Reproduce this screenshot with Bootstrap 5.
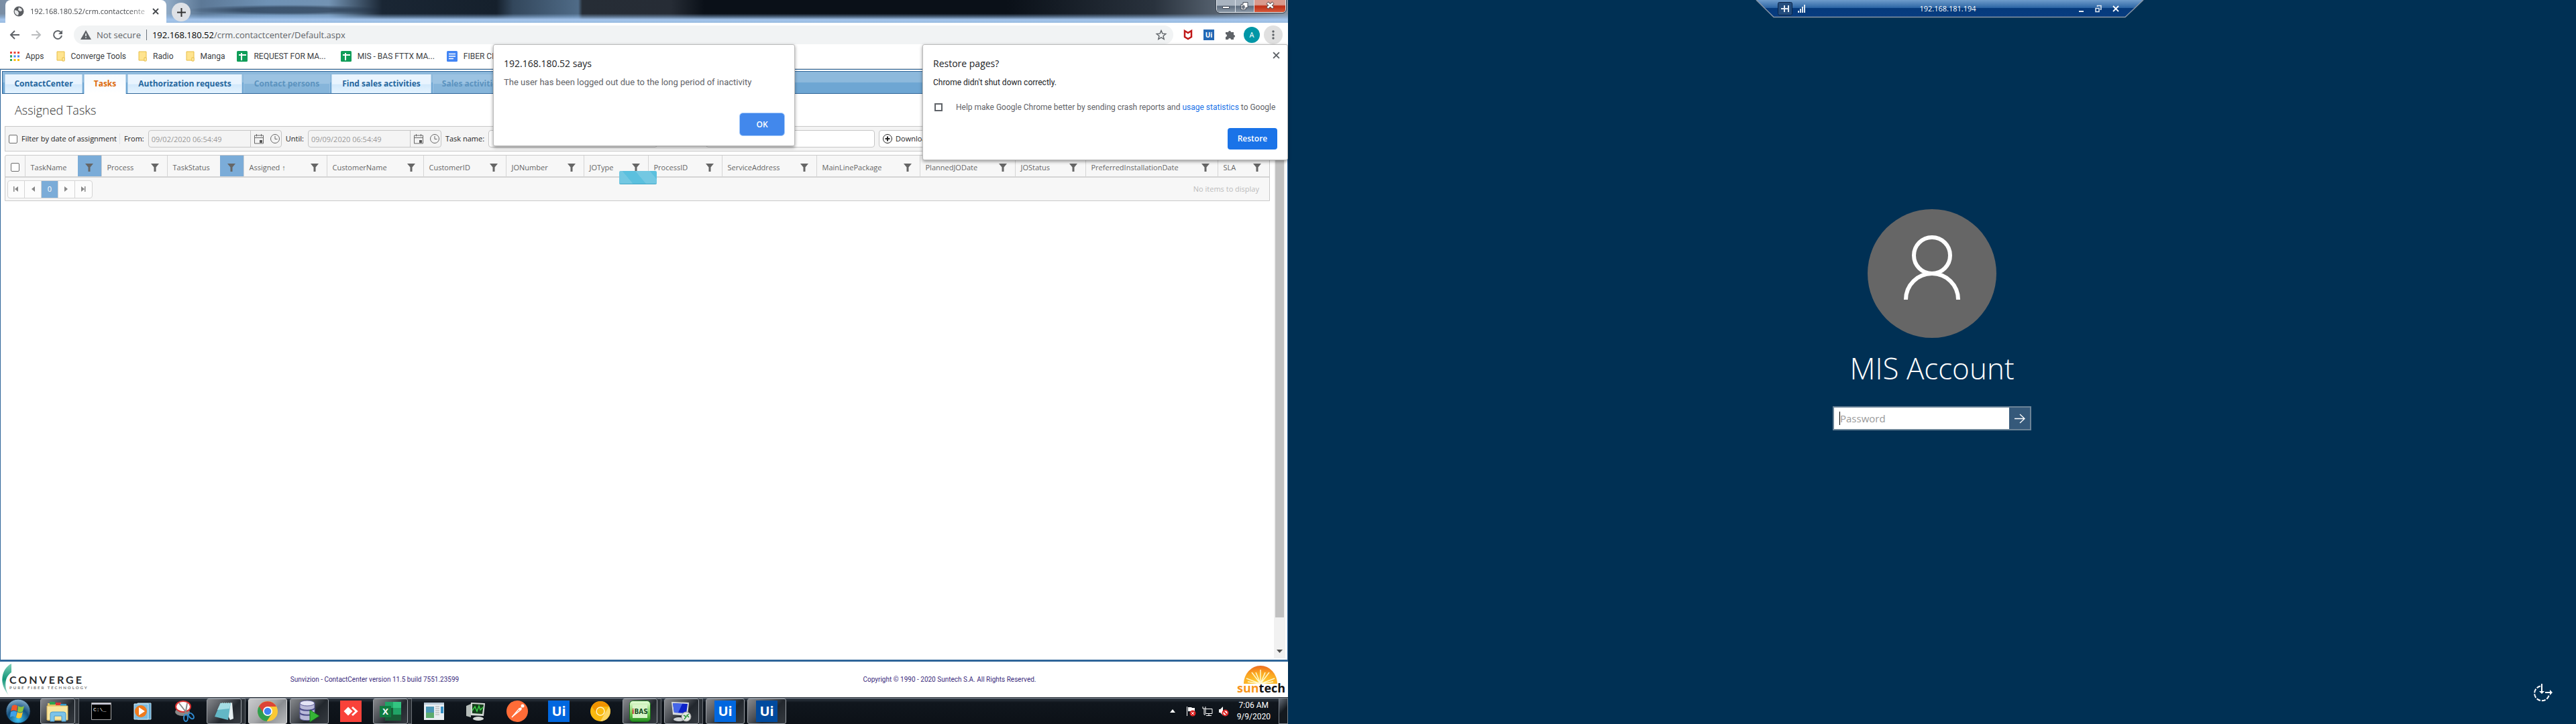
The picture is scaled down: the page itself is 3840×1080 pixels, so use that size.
<!DOCTYPE html>
<html lang="en">
<head>
<meta charset="utf-8">
<meta name="viewport" content="width=device-width, initial-scale=1">
<title>ContactCenter - Assigned Tasks</title>
<link rel="stylesheet" href="https://cdn.jsdelivr.net/npm/bootstrap@5.3.0/dist/css/bootstrap.min.css">
<style>
:root{--ui:"Open Sans","Noto Sans",sans-serif;--dlg:Roboto,"Open Sans",sans-serif;--line:#2f6699;--grey:#5f6368}
body{font:11px/16px var(--ui);color:#333;background:#003054}
button,input{font:inherit;color:inherit}
button{border:0;background:none;padding:0}
svg{display:block;flex:none;overflow:visible}
.desktop{min-height:100vh}
.monitor{flex:1 1 0;min-width:0}
.left-side{background:#fff}
/* browser chrome */
.titlebar{height:34px;background:
 linear-gradient(180deg,transparent 60%,rgba(150,190,235,.5) 74%,#a5c5ec 86%,#98bbe0 100%),
 radial-gradient(ellipse 150px 8px at 430px 15px,rgba(20,35,55,.55) 50%,transparent),
 linear-gradient(90deg,#7a8ea4 0,#8fa9c4 250px,#5c7896 300px,#6f92b5 400px,#7393b3 490px,#1a2634 570px,#15202c 740px,#33475c 765px,#4f6b87 862px,#262d36 868px,#262c35 1000px,#0a1018 1050px,#0a1018 1500px,#29323d 1720px,#8796a6 100%)}
.page-tab{width:240px;background:#fff;border-radius:8px 8px 0 0;margin-left:8px;padding:0 11px;color:#45484c}
.page-tab .cut{flex:1;white-space:nowrap;-webkit-mask:linear-gradient(90deg,#000 85%,rgba(0,0,0,.3));mask:linear-gradient(90deg,#000 85%,rgba(0,0,0,.3))}
.new-tab{width:28px;height:28px;border-radius:50%;background:#dee1e6;margin-left:8px}
.winbtns{height:19px;border:1px solid #e9eef4;border-top:0;border-radius:0 0 5px 5px;overflow:hidden;outline:1px solid #39434f;margin-right:3px}
.winbtns button{height:18px;width:28px;border-right:1px solid #dde4ec;background:linear-gradient(#a9b4c0 45%,#5c6b7c 50%,#8b98a6)}
.winbtns .shut{width:46px;border:0;background:linear-gradient(#d99a8d 40%,#bf2f15 50%,#d4573a)}
.toolbar{height:36px;padding:0 8px 0 14px}
.omni{height:28px;flex:1;border-radius:14px;background:#f1f3f4;padding:0 10px;font-size:13px;color:var(--grey)}
.extras{gap:16px;margin-left:15px}
.avatar{width:24px;height:24px;border-radius:50%;background:#0097a7;color:#fff;margin:0 -10px 0 -4px}
.dots{width:28px;height:28px;border-radius:50%;background:#e0e0e0}
.bookmarks{height:33px;padding:0 0 4px 14px;gap:18px;border-bottom:1px solid #ccd0d6;font:12px/16px var(--dlg)}
.bookmarks a{color:#3c4043;text-decoration:none;gap:9px}
/* application */
.frame{border:1px solid var(--line);border-bottom-width:3px;flex:1;min-height:0}
.app{padding:2px 6px 0 2px;flex:1 1 0;min-width:0}
.tabstrip{border:1px solid var(--line);height:34px;padding:4px 0 0 3px;gap:2px;background:linear-gradient(#8db9dc 48%,#6ea6d3 52%,#6ea6d3)}
.tabstrip a{height:28px;line-height:28px;border-left:1px solid #bcd8ee;border-right:1px solid #bcd8ee;background:linear-gradient(#e9f4fe 50%,#d3e9fb 55%,#e4f3ff);color:#26679e;font-size:12px;font-weight:700;text-decoration:none;text-align:center;white-space:nowrap}
.tabstrip a.now{background:linear-gradient(#f4faff,#fff);color:#dd6a0c;height:29px}
.tabstrip a.off{background:linear-gradient(#9cc3e2 48%,#86b5da 52%);color:#5c93bf;border-color:#9cc3e2}
h1{font-size:18px;font-weight:300;line-height:24px;padding:12px 0 0 19px;margin:0 0 12px}
.filterbar{margin-left:4px;border:1px solid #c9c9c9;background:#f4f4f4;height:38px;padding-left:5px;gap:6px;color:#222;white-space:nowrap}
.filterbar>*{flex:none}
.box{height:26px;border:1px solid #c5c5c5;border-radius:4px;background:#fff}
.stamp{width:199px;background:#f4f4f4}
.stamp input{width:152px;height:24px;border:0;border-right:1px solid #c5c5c5;background:none;padding:0 4px;color:#999}
input[type=checkbox]{appearance:none;width:13px;height:13px;border:1px solid #6d6d6d;border-radius:2px;background:#fff;margin:0;flex:none}
.wide{width:252px}
.second{margin-left:66px}
.gridbox{margin:5px 0 0 4px;border:1px solid #c9c9c9;border-radius:3px 3px 0 0;background:#f7f7f7}
.gridbox table{table-layout:fixed;width:100%;margin:0}
.gridbox th{font-weight:400;padding:0;height:31px;border-right:1px solid #d5d5d5;color:#656565;white-space:nowrap}
.gridbox th:last-child{border-right:0}
.gridbox thead{border-bottom:2px solid #d5d5d5}
.gridbox th .label{padding:10px 0 0 8px;flex:1;height:31px}
.gridbox th button{width:35px;height:31px;padding:5px 0 0 10px}
.gridbox th button.hot{background:#7bacd8}
.pager{height:34px;padding:0 15px 0 3px;color:#bbb}
.pages{border:1px solid #d5d5d5;border-radius:4px;background:#fcfcfc;overflow:hidden}
.pages button{width:25px;height:25px;border-right:1px solid #d5d5d5}
.pages button:last-child{border:0}
.pages .cur{background:#7bacd8;color:#fff}
.scroller{flex:none;width:17px;background:#f1f1f1;margin:0 3px 2px 0}
.scroller .thumb{width:13px;background:#c1c1c1;height:93%}
.site-foot{height:53px;font:10px/16px var(--dlg);color:#3a2a7c}
/* taskbar */
.taskbar{height:40px;border-top:1px solid #20262e;box-shadow:inset 0 1px #8b94a0;background:linear-gradient(#2b333d 2px,#10161d 7px,#0c1117);color:#fff}
.slot{width:62px;height:40px;padding:1px 0}
.slot .tile{width:58px;height:38px}
.open .tile,.stack .tile{border:1px solid #9a9fa5;border-radius:3px;background:linear-gradient(135deg,#86888c 0,#4b4f55 40%,#22272d 60%,#353a40)}
.stack .tile{width:52px}
.stack::after{content:"";width:6px;height:38px;border:solid #6c7177;border-width:1px 1px 1px 0;background:#2b3036}
.lit .tile{background:linear-gradient(135deg,#c9cacc 0,#a5a7aa 45%,#8a8d91 60%,#b9bbbd);border-color:#ddd}
.start{width:54px;margin-right:6px}
.tray{gap:8px}
.clock{font:12px/17px var(--dlg);text-align:center;margin:0 4px}
.peek{width:14px;height:39px;border:1px solid #7b838c;background:linear-gradient(135deg,#68707a,#14191f 50%)}
/* windows over the page */
.float{background:#fff;border:1px solid #bcbcbc;border-radius:3px;box-shadow:0 2px 5px rgba(0,0,0,.4);position:absolute;top:66px;padding:18px 15px 15px;color:#202124;font:13px/16px var(--dlg);z-index:3}
.float h2{font:14px/20px var(--ui);margin:0 0 10px}
.float p{margin:0}
.alertbox{width:450px;height:152px;left:50%;transform:translateX(-50%)}
.bubble{width:545px;height:173px;right:0}
.bubble p,.bubble label{font-size:12px}
.bubble .consent{margin-top:21px;padding-left:2px;gap:20px;color:#5f6368}
.bubble input[type=checkbox]{width:12px;height:12px;border:2px solid #5f6368;border-radius:0}
.bubble .dismiss{position:absolute;top:10px;right:11px;color:#5f6368}
.go{height:32px;width:74px;background:#1a73e8;color:#fff;border-radius:4px;font-weight:600;font-size:12px;font-family:var(--ui)}
.alertbox .go{width:66px;height:33px;background:#4288ec;outline:1px solid #a6cbfb}
.progress-chip{position:absolute;left:923px;top:255px;width:56px;height:20px;border-radius:2px;border-bottom:1px solid #3fa4c5;background:linear-gradient(50deg,#73c8e2 28%,#5bc0de 29%,#5bc0de 55%,#73c8e2 56%,#73c8e2 85%,#5bc0de 86%);z-index:2}
/* remote session */
.remote{background:#003054;color:#fff;padding-top:312px}
.rdpbar{position:absolute;top:0;left:50%;transform:translateX(-50%);margin-left:27px;width:578px;height:27px}
.rdpbar>svg{position:absolute;left:0;top:0}
.rdpbar .inner{position:relative;height:26px;padding:0 37px 0 32px}
.face{width:192px;height:192px}
.who{font-size:44px;font-weight:300;line-height:60px;margin:15px 0 27px}
.pass{width:296px;height:36px;border:2px solid #6b8397;background:#35597a}
.pass input{border:0;border-radius:0;background:#fff;flex:1;min-width:0;padding:0 9px;font-size:15px;outline:0}
.pass input::placeholder{color:#999}
.caret{position:absolute;left:8px;top:6px;width:1px;height:20px;background:#000}
.pass button{width:31px}
.ease{position:absolute;right:34px;bottom:32px}
</style>
</head>
<body>
<svg width="0" height="0" class="position-absolute">
<defs>
<symbol id="funnel" viewBox="0 0 14 14"><path d="M1 1h12L8.500 6.500V13h-3V6.500z" fill="#666"/></symbol>
<symbol id="cal" viewBox="0 0 16 16"><path d="M1.500 3h13v12h-13zM1.500 6.500h13M4.500 1v3.500M11.500 1v3.500" fill="none" stroke="#666"/><path d="M9 10h4v4H9z" fill="#555"/></symbol>
<symbol id="clk" viewBox="0 0 16 16"><circle cx="8" cy="8" r="6.500" fill="none" stroke="#666"/><path d="M8 4v4.500h3.500" fill="none" stroke="#666"/></symbol>
<symbol id="fold" viewBox="0 0 13 16"><path d="M1 1h11v13H1z" fill="#ffe48f" stroke="#e8bd45"/><path d="M9 15V10h3v5z" fill="#fff0b5" stroke="#e8bd45"/></symbol>
<symbol id="sheet" viewBox="0 0 16 16"><rect width="16" height="16" rx="1.500" fill="#0f9d58"/><path d="M3 6h11M7 3v11" stroke="#fff" stroke-width="2"/></symbol>
<symbol id="uipath" viewBox="0 0 32 32"><rect width="32" height="32" fill="currentColor"/><text x="16" y="23" text-anchor="middle" font-family="Open Sans" font-weight="700" font-size="20" fill="#fff">Ui</text></symbol>
<symbol id="xx" viewBox="0 0 10 10"><path d="M1 1l8 8M9 1L1 9" stroke="currentColor" stroke-width="1.800"/></symbol>
</defs></svg>

<div class="desktop d-flex">
<main class="monitor left-side position-relative d-flex flex-column">
  <header>
    <div class="titlebar d-flex align-items-start">
      <div class="page-tab d-flex align-items-center h-100">
        <svg width="18" height="18" viewBox="0 0 18 18" class="me-2"><circle cx="9" cy="9" r="7.500" fill="#5a5d61"/><path d="M3 7l4 1 2 3-1 4c-4-1-6-4-5-8zM9 3l4 2 1 3-3 1-3-2z" fill="#e6e8ea"/></svg>
        <span class="cut">192.168.180.52/crm.contactcente</span>
        <button class="ms-2" aria-label="Close tab"><svg width="10" height="10"><use href="#xx"/></svg></button>
      </div>
      <button class="new-tab d-flex align-items-center justify-content-center mt-1" aria-label="New tab"><svg width="13" height="13" viewBox="0 0 13 13"><path d="M6.500 0v13M0 6.500h13" stroke="#333" stroke-width="2"/></svg></button>
      <div class="flex-fill"></div>
      <div class="winbtns d-flex">
        <button aria-label="Minimize"><svg width="27" height="18"><path d="M8.500 9.500h10v3h-10z" fill="#fff" stroke="#444c58"/></svg></button>
        <button aria-label="Restore down"><svg width="27" height="18"><path d="M11 3.500h7v8h-3v3H8v-8h3z" fill="#fff" stroke="#444c58"/><path d="M10 8.500h3v4h-3z" fill="#7b8795" stroke="#444c58"/></svg></button>
        <button class="shut" aria-label="Close"><svg width="46" height="18"><path d="M19 4l9 8M28 4l-9 8" stroke="#5a4a4a" stroke-width="4.500"/><path d="M19.500 4.500l8 7M27.500 4.500l-8 7" stroke="#fff" stroke-width="2.800"/></svg></button>
      </div>
    </div>
    <div class="toolbar d-flex align-items-center">
      <button aria-label="Back"><svg width="16" height="16" viewBox="0 0 16 16"><path d="M15 8H2M8 2L2 8l6 6" fill="none" stroke="#5f6368" stroke-width="2"/></svg></button>
      <button class="ms-3" aria-label="Forward"><svg width="16" height="16" viewBox="0 0 16 16"><path d="M1 8h13M8 2l6 6-6 6" fill="none" stroke="#babcbe" stroke-width="2"/></svg></button>
      <button class="mx-3" aria-label="Reload"><svg width="16" height="16" viewBox="0 0 16 16"><path d="M13 4.500A6 6 0 1 0 14 9" fill="none" stroke="#5f6368" stroke-width="2"/><path d="M15 1v6H9z" fill="#5f6368"/></svg></button>
      <div class="omni d-flex align-items-center">
        <svg width="16" height="14" viewBox="0 0 16 14" class="me-2"><path d="M8 0l8 14H0z" fill="#5f6368"/><path d="M8 5v4M8 10.500v1.500" stroke="#f1f3f4" stroke-width="1.600"/></svg>
        <span>Not secure</span><span class="border-start border-secondary mx-2">&#8203;</span>
        <span><span class="text-black">192.168.180.52</span>/crm.contactcenter/Default.aspx</span>
        <button class="ms-auto" aria-label="Bookmark"><svg width="16" height="16" viewBox="0 0 16 16"><path d="M8 1.500l1.900 4.600 4.900.4-3.800 3.200 1.200 4.800L8 11.900l-4.200 2.600L5 9.700 1.200 6.500l4.900-.4z" fill="none" stroke="#5f6368" stroke-width="1.400"/></svg></button>
      </div>
      <div class="extras d-flex align-items-center">
        <svg width="14" height="16" viewBox="0 0 14 16"><path d="M2 2l5 3 5-3v9l-5 3-5-3z" fill="none" stroke="#c01818" stroke-width="2.500"/></svg>
        <svg width="16" height="16" style="color:#2368b5"><use href="#uipath"/></svg>
        <svg width="16" height="16" viewBox="0 0 16 16"><path d="M1 4h4a2 2 0 1 1 4 0h4v4a2 2 0 1 1 0 4v3H9a2 2 0 1 0-4 0H1v-4a2 2 0 1 0 0-4z" fill="#5f6368"/></svg>
        <button class="avatar">A</button>
        <button class="dots d-flex align-items-center justify-content-center" aria-label="Menu"><svg width="4" height="14" viewBox="0 0 4 14"><g fill="#5f6368"><circle cx="2" cy="2" r="1.700"/><circle cx="2" cy="7" r="1.700"/><circle cx="2" cy="12" r="1.700"/></g></svg></button>
      </div>
    </div>
    <nav class="bookmarks d-flex align-items-center" aria-label="Bookmarks">
      <a href="#" class="d-flex align-items-center"><svg width="15" height="14" viewBox="0 0 15 14"><g stroke-width="3" stroke-dasharray="3 2.500"><path d="M1 1.500h14" stroke="#ea4335"/><path d="M1 7h14" stroke="#4285f4"/><path d="M1 12.500h14" stroke="#fbbc05"/><path d="M1 7h3M1 12.500h3" stroke="#34a853"/></g></svg>Apps</a>
      <a href="#" class="d-flex align-items-center"><svg width="13" height="16"><use href="#fold"/></svg>Converge Tools</a>
      <a href="#" class="d-flex align-items-center"><svg width="13" height="16"><use href="#fold"/></svg>Radio</a>
      <a href="#" class="d-flex align-items-center"><svg width="13" height="16"><use href="#fold"/></svg>Manga</a>
      <a href="#" class="d-flex align-items-center"><svg width="16" height="16"><use href="#sheet"/></svg>REQUEST FOR MA...</a>
      <a href="#" class="d-flex align-items-center ms-1"><svg width="16" height="16"><use href="#sheet"/></svg>MIS - BAS FTTX MA...</a>
      <a href="#" class="d-flex align-items-center"><svg width="16" height="16"><rect width="16" height="16" rx="1.500" fill="#4285f4"/><path d="M3 4.500h10M3 8h10M3 11.500h7" stroke="#fff" stroke-width="1.700"/></svg>FIBER CHE</a>
    </nav>
  </header>

  <section class="frame d-flex">
    <div class="app">
      <nav class="tabstrip d-flex" aria-label="Sections">
        <a href="#" style="width:116px">ContactCenter</a><a href="#" class="now" style="width:63px">Tasks</a><a href="#" style="width:171px">Authorization requests</a><a href="#" class="off" style="width:129px">Contact persons</a><a href="#" style="width:149px">Find sales activities</a><a href="#" class="off" style="width:116px">Sales activities</a>
      </nav>
      <h1>Assigned Tasks</h1>
      <div class="filterbar d-flex align-items-center">
        <input type="checkbox" id="bydate"><label for="bydate" class="pe-1 border-end">Filter by date of assignment</label>
        <label for="from">From:</label>
        <div class="box stamp d-flex align-items-center"><input id="from" value="09/02/2020 06:54:49"><svg width="16" height="16" class="ms-1 me-2"><use href="#cal"/></svg><svg width="16" height="16"><use href="#clk"/></svg></div>
        <label for="until">Until:</label>
        <div class="box stamp d-flex align-items-center"><input id="until" value="09/09/2020 06:54:49"><svg width="16" height="16" class="ms-1 me-2"><use href="#cal"/></svg><svg width="16" height="16"><use href="#clk"/></svg></div>
        <label for="tname">Task name:</label>
        <input class="box wide" id="tname">
        <input class="box wide second" id="cust" aria-label="Customer">
        <button class="box d-flex align-items-center px-1"><svg width="16" height="16" viewBox="0 0 16 16" class="me-1"><circle cx="8" cy="8" r="6.500" fill="none" stroke="#222"/><path d="M8 4.500v7M4.500 8h7" stroke="#222" stroke-width="2"/></svg>Download</button>
      </div>
      <div class="gridbox">
        <table>
          <colgroup id="cols"></colgroup>
          <thead><tr id="heads"></tr></thead>
        </table>
        <div class="pager d-flex align-items-center justify-content-between">
          <div class="pages d-flex">
            <button aria-label="First"><svg width="24" height="10" viewBox="0 0 24 10"><path d="M8 1h1.500v8H8zM15 1v8L10 5z" fill="#888"/></svg></button>
            <button aria-label="Previous"><svg width="24" height="10" viewBox="0 0 24 10"><path d="M15 1v8l-5-4z" fill="#888"/></svg></button>
            <button class="cur">0</button>
            <button aria-label="Next"><svg width="24" height="10" viewBox="0 0 24 10"><path d="M9 1v8l5-4z" fill="#888"/></svg></button>
            <button aria-label="Last"><svg width="24" height="10" viewBox="0 0 24 10"><path d="M14 1h1.500v8H14zM9 1v8l5-4z" fill="#888"/></svg></button>
          </div>
          <span>No items to display</span>
        </div>
      </div>
    </div>
    <div class="scroller d-flex flex-column align-items-center justify-content-between"><div class="thumb"></div><svg width="9" height="5" class="mb-2" viewBox="0 0 9 5"><path d="M0 0h9L4.500 5z" fill="#505050"/></svg></div>
  </section>

  <footer class="site-foot d-flex align-items-center">
    <svg width="130" height="48" viewBox="0 0 130 48"><defs><linearGradient id="leaf" x2="0" y2="1"><stop offset="0" stop-color="#7fd0b8"/><stop offset=".5" stop-color="#12967a"/><stop offset="1" stop-color="#bfe6da"/></linearGradient></defs><path d="M17 0C4 6-4 28 13 47 8 40 4 22 17 13z" fill="url(#leaf)"/><text x="14" y="30" font-family="Lato" font-weight="700" font-size="16" letter-spacing="3" fill="#2b2d2f">CONVERGE</text><text x="14" y="38" font-family="Lato" font-weight="700" font-size="6" letter-spacing="2" fill="#777">PURE FIBER TECHNOLOGY</text></svg>
    <span class="flex-fill w-50 text-center">Sunvizion - ContactCenter version 11.5 build 7551.23599</span>
    <span class="flex-fill w-50 text-center">Copyright © 1990 - 2020 Suntech S.A. All Rights Reserved.</span>
    <svg width="72" height="46" viewBox="0 0 72 46" class="me-1"><defs><radialGradient id="sun" cx=".5" cy="1" r="1"><stop offset="0" stop-color="#ffd83a"/><stop offset=".6" stop-color="#fba922"/><stop offset="1" stop-color="#ee6a1e"/></radialGradient></defs><path d="M10 29a25 27 0 0 1 50 0z" fill="url(#sun)"/><g stroke="#fff8cf" stroke-width="1.500"><path d="M35 29L14 21M35 29L22 12M35 29V8M35 29l13-17M35 29l21-8M35 29L16 26M35 29l19-3M35 29L28 12M35 29l7-17"/></g><text x="0" y="42" font-family="Open Sans" font-weight="700" font-size="18" fill="#f7941d">sun<tspan fill="#111">tech</tspan></text></svg>
  </footer>

  <nav class="taskbar d-flex align-items-center" aria-label="Taskbar">
    <button aria-label="Start" class="start d-flex justify-content-center"><svg width="38" height="38" viewBox="0 0 38 38"><defs><radialGradient id="orb" cx=".5" cy=".85" r=".9"><stop offset="0" stop-color="#3fc2f2"/><stop offset=".5" stop-color="#12507f"/><stop offset="1" stop-color="#9cc0d8"/></radialGradient></defs><circle cx="19" cy="19" r="18" fill="url(#orb)" stroke="#123"/><path d="M10 11c3-2 5-2 8 0l-1 8c-3-2-6-2-9 0z" fill="#f0582a"/><path d="M19 11c3 2 6 2 9 0l-2 8c-3 2-5 2-8 0z" fill="#8cc63e"/><path d="M8 20c3-2 6-2 9 0l-2 8c-3-2-5-2-8 0z" fill="#3fa0e8"/><path d="M18 20c3 2 5 2 8 0l-2 8c-3 2-5 2-8 0z" fill="#fdc72e"/></svg></button>
    <div class="d-flex">
      <button class="slot stack d-flex" aria-label="Explorer"><span class="tile d-flex align-items-center justify-content-center"><svg width="34" height="32" viewBox="0 0 34 32"><path d="M2 4h10l2 2h16v24H2z" fill="#e9c763"/><path d="M5 2h8v4H5z" fill="#2da44e"/><path d="M14 3h8v4h-8z" fill="#d33"/><path d="M21 5h9v4h-9z" fill="#39c"/><path d="M1 8h31v21H1z" fill="#f9e69d" stroke="#d8b45a"/><path d="M6 31V20q0-3 3-3h17q3 0 3 3v11h-6v-8H12v8z" fill="#7cc4ea" stroke="#4898c8"/></svg></span></button>
      <button class="slot" aria-label="Command prompt"><span class="tile d-flex align-items-center justify-content-center"><svg width="30" height="26" viewBox="0 0 30 26"><path d="M.5.500h29v25H.5z" fill="#000" stroke="#aaa"/><path d="M1 1h28v2H1z" fill="#ccd"/><text x="3" y="13" font-family="Liberation Mono" font-size="8" fill="#fff">C:\_</text></svg></span></button>
      <button class="slot" aria-label="Media player"><span class="tile d-flex align-items-center justify-content-center"><svg width="28" height="28" viewBox="0 0 28 28"><path d="M6 2h20v24H6z" fill="#5fa6d2" stroke="#bfe0f2"/><path d="M1 3h21v23H1z" fill="#7dbce0" stroke="#d6ecf7"/><circle cx="11" cy="14" r="9" fill="#f07a1c"/><path d="M8 8v12l9-6z" fill="#fff"/></svg></span></button>
      <button class="slot" aria-label="Snipping tool"><span class="tile d-flex align-items-center justify-content-center"><svg width="32" height="32" viewBox="0 0 32 32"><ellipse cx="13" cy="17" rx="11" ry="6" fill="#888"/><ellipse cx="14" cy="9" rx="11" ry="8" fill="#fff" stroke="#d33" stroke-width="2"/><path d="M8 4l14 18M20 4L17 22" stroke="#888" stroke-width="2"/><ellipse cx="18" cy="26" rx="3" ry="5" fill="none" stroke="#2f8bd0" stroke-width="2"/><ellipse cx="26" cy="23" rx="3" ry="5" fill="none" stroke="#2f8bd0" stroke-width="2" transform="rotate(-40 26 23)"/></svg></span></button>
      <button class="slot stack d-flex" aria-label="Notepad"><span class="tile d-flex align-items-center justify-content-center"><svg width="32" height="30" viewBox="0 0 32 30"><path d="M12 2h16l2 24-5 2z" fill="#e5eef0"/><path d="M11 2h15l-4 26L2 23z" fill="#63b7c6"/><path d="M11 2h15l-2 9L6 13z" fill="#a5dde4"/><path d="M11 2h16" stroke="#555" stroke-width="2" stroke-dasharray="1.500 1.500"/></svg></span></button>
      <button class="slot open lit" aria-label="Chrome"><span class="tile d-flex align-items-center justify-content-center"><svg width="30" height="30" viewBox="0 0 30 30"><circle cx="15" cy="15" r="15" fill="#fbc934"/><path d="M15 15L2 7.500A15 15 0 0 0 13.500 30L21 19z" fill="#2f9e4f"/><path d="M2 7.500A15 15 0 0 1 28 8H15l-6 10z" fill="#dc4437"/><circle cx="15" cy="15" r="7" fill="#fff"/><circle cx="15" cy="15" r="5.300" fill="#3f83f0"/></svg></span></button>
      <button class="slot open" aria-label="Database"><span class="tile d-flex align-items-center justify-content-center"><svg width="32" height="34" viewBox="0 0 32 34"><path d="M2 5v22c0 5 22 5 22 0V5z" fill="#b9b9d8" stroke="#5c5c96"/><ellipse cx="13" cy="5" rx="11" ry="4" fill="#e4e4f5" stroke="#5c5c96"/><path d="M2 12c0 5 22 5 22 0M2 19c0 5 22 5 22 0" fill="none" stroke="#4b4b88" stroke-width="2"/><path d="M17 15l14 9-14 9z" fill="#36b536" stroke="#15721a"/></svg></span></button>
      <button class="slot" aria-label="AnyDesk"><span class="tile d-flex align-items-center justify-content-center"><svg width="32" height="32" viewBox="0 0 32 32"><path d="M0 0h32v32H0z" fill="#f9423a"/><path d="M12 9.500l6.500 6.500-6.500 6.500L5.500 16z" fill="#fff"/><path d="M18 10l6.500 6-6.500 6" fill="none" stroke="#fff" stroke-width="3"/></svg></span></button>
      <button class="slot stack d-flex" aria-label="Excel"><span class="tile d-flex align-items-center justify-content-center"><svg width="32" height="30" viewBox="0 0 32 30"><path d="M8 1h24v28H8z" fill="#21a366"/><path d="M20 1h12v9H20z" fill="#33c481"/><path d="M8 10h12v10H8zM20 20h12v9H8v-9z" fill="#185c37"/><path d="M0 7h17v17H0z" fill="#107c41"/><text x="8.500" y="20" text-anchor="middle" font-family="Open Sans" font-weight="700" font-size="13" fill="#fff">X</text></svg></span></button>
      <button class="slot" aria-label="Viewer"><span class="tile d-flex align-items-center justify-content-center"><svg width="30" height="26" viewBox="0 0 30 26"><path d="M0 0h30v26H0z" fill="#e8eef2"/><path d="M0 0h30v3H0z" fill="#bccbd8"/><path d="M3 6h12v17H3z" fill="#4b96b5"/><path d="M3 15h12v8H3z" fill="#5cab6e"/><path d="M17 6h6M17 9h6M17 12h6M17 15h6M17 18h6" stroke="#aaa"/><path d="M25 6h4v10h-4z" fill="#368fc4"/></svg></span></button>
      <button class="slot" aria-label="Monitor"><span class="tile d-flex align-items-center justify-content-center"><svg width="30" height="30" viewBox="0 0 30 30"><path d="M1 7l7-3v20l-7-2z" fill="#b5bcb8"/><path d="M8 2l21 1-2 19-19-1z" fill="#d5d9d6"/><path d="M10 4l17 1-2 14-15-1z" fill="#143d1a"/><path d="M10 14l4-6 3 7 3-8 2 6 4-4" fill="none" stroke="#3bd047" stroke-width="1.500"/><ellipse cx="19" cy="26" rx="8" ry="3" fill="#d5d9d6"/></svg></span></button>
      <button class="slot" aria-label="Postman"><span class="tile d-flex align-items-center justify-content-center"><svg width="32" height="32" viewBox="0 0 32 32"><circle cx="16" cy="16" r="16" fill="#ff6c37"/><path d="M8 25l11-13 2 2-11 9z" fill="none" stroke="#fff" stroke-width="1.500"/><path d="M18 12l4-2 1 3-3 2z" fill="#fff"/><circle cx="24" cy="8" r="2.500" fill="#fff"/></svg></span></button>
      <button class="slot" style="color:#0067df"><span class="tile d-flex align-items-center justify-content-center"><svg width="32" height="32"><use href="#uipath"/></svg></span></button>
      <button class="slot" aria-label="Chrome Canary"><span class="tile d-flex align-items-center justify-content-center"><svg width="30" height="30" viewBox="0 0 30 30"><circle cx="15" cy="15" r="15" fill="#f9b90f"/><path d="M2 7.500A15 15 0 0 1 28 8H15l-6 10z" fill="#f09300"/><path d="M28 8A15 15 0 0 1 15 30l6-11z" fill="#fdd663"/><circle cx="15" cy="15" r="6" fill="#f9b90f" stroke="#fff3c4" stroke-width="1.500"/></svg></span></button>
      <button class="slot stack d-flex"><span class="tile d-flex align-items-center justify-content-center"><svg width="32" height="32" viewBox="0 0 32 32"><defs><linearGradient id="gr" x2="0" y2="1"><stop offset="0" stop-color="#eaffde"/><stop offset=".6" stop-color="#78cc54"/><stop offset="1" stop-color="#1f8a1c"/></linearGradient></defs><rect x=".5" y=".5" width="31" height="31" rx="5" fill="url(#gr)" stroke="#147014"/><path d="M5 6h22v20H5z" fill="#d8f5c8"/><text x="16" y="20" text-anchor="middle" font-family="DejaVu Sans Condensed" font-weight="700" font-size="10" fill="#174c20"><tspan fill="#c22">i</tspan>BAS</text></svg></span></button>
      <button class="slot stack d-flex" aria-label="Remote desktop"><span class="tile d-flex align-items-center justify-content-center"><svg width="32" height="32" viewBox="0 0 32 32"><path d="M1 2l26 1-2 20L3 21z" fill="#d4d8dc"/><path d="M3 4l22 1-2 14L5 18z" fill="#0b22c8"/><path d="M3 4l14 1-6 13H5z" fill="#4666e8"/><ellipse cx="12" cy="28" rx="8" ry="3" fill="#cdd1d4"/><circle cx="23" cy="24" r="7" fill="#e3e6e3" stroke="#999"/><path d="M19 22l4 2-3 4M27 20l-3 2 3 3" fill="none" stroke="#299a35" stroke-width="1.500"/></svg></span></button>
      <button class="slot open" style="color:#0067df"><span class="tile d-flex align-items-center justify-content-center"><svg width="32" height="32"><use href="#uipath"/></svg></span></button>
      <button class="slot open" style="color:#004a9e"><span class="tile d-flex align-items-center justify-content-center"><svg width="32" height="32"><use href="#uipath"/></svg></span></button>
    </div>
    <div class="tray ms-auto d-flex align-items-center">
      <svg width="8" height="5" viewBox="0 0 8 5" class="me-2"><path d="M4 0l4 5H0z" fill="#fff"/></svg>
      <svg width="16" height="16" viewBox="0 0 16 16"><path d="M1.500 1v14" stroke="#fff"/><path d="M3 2h5l1 1h4v6H8L7 8H3z" fill="#fff"/><circle cx="10" cy="11" r="4.500" fill="#d22"/><path d="M8 9l4 4M12 9l-4 4" stroke="#fff"/></svg>
      <svg width="16" height="16" viewBox="0 0 16 16"><path d="M5 4.500h10v7H5zM10 12v2M6 14.500h8M1 1v3h4V1M3 4v9h2" fill="none" stroke="#fff"/></svg>
      <svg width="16" height="16" viewBox="0 0 16 16"><path d="M1 5h2l4-4v13l-4-4H1z" fill="#fff"/><circle cx="10.500" cy="10.500" r="4" fill="#fff" stroke="#d22" stroke-width="2"/><path d="M8 8l5 5" stroke="#d22" stroke-width="2"/></svg>
      <div class="clock">7:06 AM<br>9/9/2020</div>
      <button class="peek" aria-label="Show desktop"></button>
    </div>
  </nav>

  <div class="progress-chip"></div>
  <div class="float alertbox d-flex flex-column" role="alertdialog">
    <h2>192.168.180.52 says</h2>
    <p style="color:#5f6368">The user has been logged out due to the long period of inactivity</p>
    <button class="go ms-auto mt-auto">OK</button>
  </div>
  <div class="float bubble d-flex flex-column" role="dialog">
    <button aria-label="Close" class="dismiss"><svg width="11" height="11"><use href="#xx"/></svg></button>
    <h2>Restore pages?</h2>
    <p>Chrome didn't shut down correctly.</p>
    <div class="consent d-flex align-items-center"><input type="checkbox" id="crash"><label for="crash">Help make Google Chrome better by sending crash reports and <a href="#" class="text-decoration-none" style="color:#1a73e8">usage statistics</a> to Google</label></div>
    <button class="go ms-auto mt-auto">Restore</button>
  </div>
</main>

<section class="monitor remote position-relative d-flex flex-column align-items-center">
  <div class="rdpbar">
    <svg width="578" height="27" viewBox="0 0 578 27"><defs><linearGradient id="rb" x2="0" y2="1"><stop offset="0" stop-color="#6f9ccb"/><stop offset=".45" stop-color="#2d66a5"/><stop offset=".46" stop-color="#053a7c"/><stop offset="1" stop-color="#073c80"/></linearGradient></defs><path d="M0 0l26 25.500h524L577 0" fill="url(#rb)" stroke="#8795a5" stroke-width="1.500"/></svg>
    <div class="inner d-flex align-items-center">
      <button aria-label="Pin"><svg width="22" height="20" viewBox="0 0 22 20"><rect x=".5" y=".5" width="21" height="19" rx="2" fill="#244d7d" stroke="#0a2448"/><path d="M5 10h5M10 5v10M10 10h6M16 5v10" stroke="#e4ebf2" stroke-width="2"/></svg></button>
      <svg width="12" height="12" viewBox="0 0 12 12" class="ms-2"><path d="M1 12V9M4 12V6M7 12V3M10 12V0" stroke="#dce6f0" stroke-width="2"/></svg>
      <span class="flex-fill text-center ms-3">192.168.181.194</span>
      <button aria-label="Minimize"><svg width="8" height="12" viewBox="0 0 8 12"><path d="M0 10h7" stroke="#e4ebf2" stroke-width="2"/></svg></button>
      <button class="mx-3" aria-label="Restore"><svg width="10" height="12" viewBox="0 0 10 12"><path d="M1 5.500h5v5H1zM3.500 3V1.500H9V7H7.500" fill="none" stroke="#e4ebf2" stroke-width="1.500"/></svg></button>
      <button aria-label="Close"><svg width="10" height="10"><use href="#xx"/></svg></button>
    </div>
  </div>
  <svg class="face" viewBox="0 0 192 192"><circle cx="96" cy="96" r="96" fill="#666"/><g fill="none" stroke="#fff" stroke-width="6"><circle cx="96" cy="69" r="27"/><path d="M57 135a39 39 0 0 1 78 0"/></g></svg>
  <div class="who">MIS Account</div>
  <form class="pass d-flex position-relative">
    <input type="password" placeholder="Password" aria-label="Password"><span class="caret"></span>
    <button type="button" aria-label="Submit" class="d-flex align-items-center justify-content-center"><svg width="16" height="15" viewBox="0 0 16 15"><path d="M0 7.500h15M8 1l7 6.500L8 14" fill="none" stroke="#fff" stroke-width="1.300"/></svg></button>
  </form>
  <button class="ease" aria-label="Ease of access"><svg width="32" height="28" viewBox="0 0 32 28"><path d="M13 3.500A11 11 0 1 0 26 16" fill="none" stroke="#fff" stroke-width="2" stroke-dasharray="6 2"/><path d="M15 0v12M20 13h8" stroke="#fff" stroke-width="2"/><path d="M11 11h8l-4 4zM27 9v8l4-4z" fill="#fff"/></svg></button>
</section>
</div>
<script>
const columns=[["TaskName",114,1],["Process",98],["TaskStatus",114,1],["Assigned ↑",124],["CustomerName",144],["CustomerID",123],["JONumber",116],["JOType",96],["ProcessID",110],["ServiceAddress",141],["MainLinePackage",154],["PlannedJODate",142],["JOStatus",105],["PreferredInstallationDate",197],["SLA"]];
cols.innerHTML='<col style="width:29px">'+columns.map(c=>c[1]?`<col style="width:${c[1]}px">`:'<col>').join('');
heads.innerHTML='<th><div class="d-flex justify-content-center pt-1"><input type="checkbox" aria-label="Select all"></div></th>'+columns.map(c=>`<th><div class="d-flex"><span class="label">${c[0]}</span><button class="${c[2]?'hot':''}" aria-label="Filter"><svg width="14" height="14"><use href="#funnel"/></svg></button></div></th>`).join('');
</script>
<script src="https://cdn.jsdelivr.net/npm/bootstrap@5.3.0/dist/js/bootstrap.bundle.min.js"></script>
</body>
</html>
